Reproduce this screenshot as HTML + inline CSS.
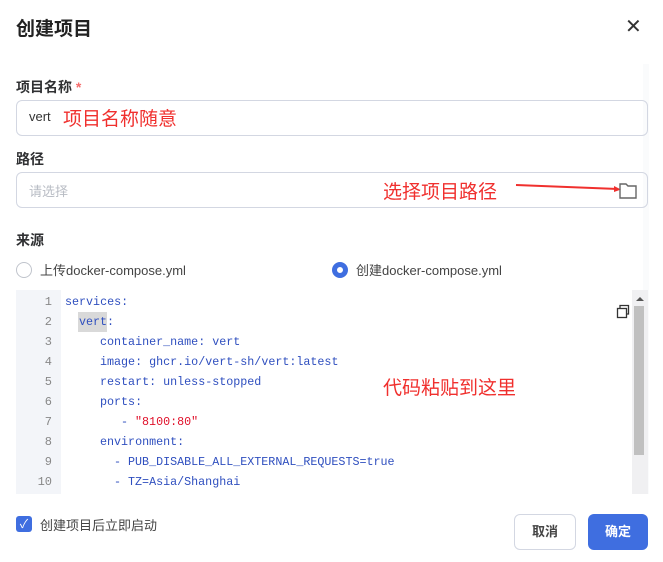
<!DOCTYPE html>
<html><head><meta charset="utf-8"><style>
*{margin:0;padding:0;box-sizing:border-box}
body{width:663px;height:562px;background:#fff;font-family:"Liberation Sans","Noto Sans CJK SC",sans-serif;color:#333;position:relative;overflow:hidden}
.a{position:absolute}
.lbl{font-size:14px;font-weight:bold;color:#303133}
.inp{border:1px solid #d3d7e2;border-radius:6px;height:36px;left:16px;width:632px}
.red{color:#f0302e;font-size:19px}
.c{position:absolute;font-family:"Liberation Mono","DejaVu Sans Mono",monospace;font-size:11.7px;color:#2f4fbf;white-space:pre;line-height:20px}
.ln{font-family:"Liberation Mono",monospace;font-size:12px;color:#888;width:36px;text-align:right}
</style></head><body>
<div class="a" style="left:16px;top:14px;font-size:19px;font-weight:bold;color:#222">创建项目</div>
<div class="a" style="left:625px;top:14px;font-size:20px;color:#333">✕</div>
<div class="a" style="left:643px;top:64px;width:6px;height:430px;background:#fafbfc"></div>

<div class="a lbl" style="left:16px;top:77px">项目名称 <span style="color:#f56c6c">*</span></div>
<div class="a inp" style="top:100px"></div>
<div class="a" style="left:29px;top:109px;font-size:13px;color:#333">vert</div>
<div class="a red" style="left:63px;top:104px">项目名称随意</div>

<div class="a lbl" style="left:16px;top:149px">路径</div>
<div class="a inp" style="top:172px"></div>
<div class="a" style="left:29px;top:181px;font-size:13px;color:#b8bcc4">请选择</div>
<div class="a red" style="left:383px;top:177px">选择项目路径</div>
<svg class="a" style="left:510px;top:178px" width="132" height="22"><path d="M6 7 L108 11" stroke="#f0302e" stroke-width="2"/><path d="M104 8 L111 11.5 L104 14z" fill="#f0302e"/><path d="M110 6 h6 l2 2 h8 v12 h-16z" fill="none" stroke="#666" stroke-width="1.4"/></svg>

<div class="a lbl" style="left:16px;top:230px">来源</div>
<div class="a" style="left:16px;top:262px;width:16px;height:16px;border:1px solid #c0c4cc;border-radius:50%"></div>
<div class="a" style="left:40px;top:260px;font-size:13px;color:#444">上传docker-compose.yml</div>
<div class="a" style="left:332px;top:262px;width:16px;height:16px;border:5px solid #3f6ee0;border-radius:50%;background:#fff"></div>
<div class="a" style="left:356px;top:260px;font-size:13px;color:#444">创建docker-compose.yml</div>

<div class="a" style="left:16px;top:290px;width:45px;height:204px;background:#f3f5f9"></div>
<div class="a" style="left:632px;top:290px;width:16px;height:204px;background:#f0f0f2"></div>
<div class="a" style="left:634px;top:306px;width:10px;height:149px;background:#c0c0c0"></div>
<div class="a" style="left:636px;top:297px;width:0;height:0;border:4px solid transparent;border-bottom:4px solid #555;border-top:0"></div>
<svg class="a" style="left:616px;top:304px" width="16" height="16"><rect x="1.5" y="4.5" width="9" height="9" fill="#fff" stroke="#333" stroke-width="1.3"/><path d="M4 4 V1.5 h8.5 v8.5 h-2" fill="none" stroke="#333" stroke-width="1.3"/></svg>
<div class="a" style="left:78px;top:312px;width:29px;height:20px;background:#d9d9d9"></div>
<div class="a" style="left:16px;top:292px;line-height:20px">
<div class="ln">1</div><div class="ln">2</div><div class="ln">3</div><div class="ln">4</div><div class="ln">5</div><div class="ln">6</div><div class="ln">7</div><div class="ln">8</div><div class="ln">9</div><div class="ln">10</div></div>
<div class="c" style="left:65px;top:292px">services:</div>
<div class="c" style="left:79px;top:312px">vert:</div>
<div class="c" style="left:100px;top:332px">container_name: vert</div>
<div class="c" style="left:100px;top:352px">image: ghcr.io/vert-sh/vert:latest</div>
<div class="c" style="left:100px;top:372px">restart: unless-stopped</div>
<div class="c" style="left:100px;top:392px">ports:</div>
<div class="c" style="left:121px;top:412px">- <span style="color:#e0102a">"8100:80"</span></div>
<div class="c" style="left:114px;top:432px;left:100px">environment:</div>
<div class="c" style="left:114px;top:452px">- PUB_DISABLE_ALL_EXTERNAL_REQUESTS=true</div>
<div class="c" style="left:114px;top:472px">- TZ=Asia/Shanghai</div>
<div class="a red" style="left:383px;top:373px">代码粘贴到这里</div>

<div class="a" style="left:16px;top:516px;width:16px;height:16px;background:#3f6ee0;border-radius:3px;color:#fff;font-size:12px;text-align:center;line-height:16px">✓</div>
<div class="a" style="left:40px;top:515px;font-size:13px;color:#444">创建项目后立即启动</div>
<div class="a" style="left:514px;top:514px;width:62px;height:36px;border:1px solid #d3d7e2;border-radius:6px;font-size:13px;font-weight:bold;color:#444;text-align:center;line-height:34px">取消</div>
<div class="a" style="left:588px;top:514px;width:60px;height:36px;background:#3f6ee0;border-radius:6px;font-size:13px;font-weight:bold;color:#fff;text-align:center;line-height:36px">确定</div>
</body></html>
